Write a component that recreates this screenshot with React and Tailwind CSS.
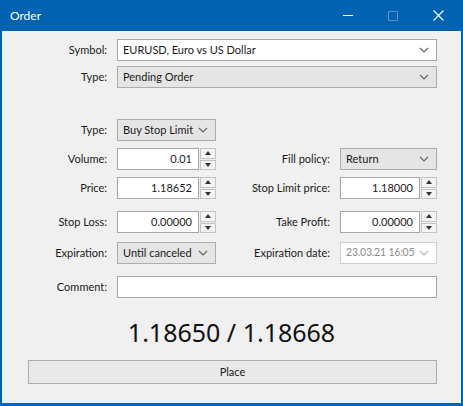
import React from "react";

const font = { fontFamily: 'Lato, "Noto Sans", sans-serif' };

function Chevron({ light }) {
  return (
    <svg width="10" height="6" viewBox="0 0 10 6" className="shrink-0">
      <path d="M1 1l4 4 4-4" fill="none" stroke={light ? "#b5b5b5" : "#606060"} strokeWidth="1.1" />
    </svg>
  );
}

function Select({ value, w, white, disabled }) {
  return (
    <div
      className={`flex h-[22px] items-center justify-between whitespace-nowrap border pl-[5px] pr-[7px] ${w} ${
        white
          ? "border-[#a6a6a6] bg-white text-[11px]"
          : disabled
          ? "border-[#cfcfcf] bg-white text-[10.5px] tracking-[-0.2px] text-[#8c8c8c]"
          : "border-[#adadad] bg-[#e5e5e5] text-[11px]"
      }`}
    >
      <span>{value}</span>
      <Chevron light={disabled} />
    </div>
  );
}

function Spin({ value, w }) {
  return (
    <div className={`flex h-[22px] items-stretch ${w}`}>
      <div className="flex flex-1 items-center justify-end border border-[#a6a6a6] bg-white pr-[6px] text-[11px]">
        {value}
      </div>
      <div className="ml-[1px] flex w-[16px] flex-col gap-[1px]">
        <div className="flex flex-1 items-center justify-center border border-[#c4c4c4] bg-[#f4f4f4]">
          <svg width="6" height="4" viewBox="0 0 6 4"><path d="M0 4L3 0 6 4z" fill="#333" /></svg>
        </div>
        <div className="flex flex-1 items-center justify-center border border-[#c4c4c4] bg-[#f4f4f4]">
          <svg width="6" height="4" viewBox="0 0 6 4"><path d="M0 0L3 4 6 0z" fill="#333" /></svg>
        </div>
      </div>
    </div>
  );
}

function Label({ children, w = "w-[107px]" }) {
  return <div className={`${w} shrink-0 whitespace-nowrap pr-[2px] text-right text-[11px]`}>{children}</div>;
}

export default function App() {
  return (
    <div className="flex h-[406px] w-[463px] flex-col bg-[#0063b1] px-[2px] pb-[3px] text-[#1a1a1a]" style={font}>
      <div className="flex h-[31px] shrink-0 items-center text-white">
        <span className="ml-[8px] flex-1 text-[12px]">Order</span>
        <div className="flex h-full items-center">
          <div className="flex h-full w-[45px] items-center justify-center">
            <div className="h-[1px] w-[10px] bg-white" />
          </div>
          <div className="flex h-full w-[45px] items-center justify-center">
            <div className="h-[10px] w-[10px] border border-[#5b8fcc]" />
          </div>
          <div className="flex h-full w-[46px] items-center justify-center">
            <svg width="11" height="11" viewBox="0 0 11 11">
              <path d="M0.5 0.5l10 10M10.5 0.5l-10 10" stroke="white" strokeWidth="1.1" />
            </svg>
          </div>
        </div>
      </div>
      <div className="flex flex-1 flex-col bg-[#f0f0f0] pr-[24px]">
        <div className="mt-[8px] flex items-center gap-[8px]">
          <Label>Symbol:</Label>
          <Select value="EURUSD, Euro vs US Dollar" w="flex-1" white />
        </div>
        <div className="mt-[5px] flex items-center gap-[8px]">
          <Label>Type:</Label>
          <Select value="Pending Order" w="flex-1" />
        </div>

        <div className="mt-[31px] flex items-center gap-[8px]">
          <Label>Type:</Label>
          <Select value="Buy Stop Limit" w="w-[99px]" />
        </div>
        <div className="mt-[7px] flex items-center gap-[8px]">
          <Label>Volume:</Label>
          <Spin value="0.01" w="w-[99px]" />
          <Label w="w-[108px]">Fill policy:</Label>
          <Select value="Return" w="flex-1" />
        </div>
        <div className="mt-[7px] flex items-center gap-[8px]">
          <Label>Price:</Label>
          <Spin value="1.18652" w="w-[99px]" />
          <Label w="w-[108px]">Stop Limit price:</Label>
          <div className="flex-1">
            <Spin value="1.18000" w="w-full" />
          </div>
        </div>
        <div className="mt-[12px] flex items-center gap-[8px]">
          <Label>Stop Loss:</Label>
          <Spin value="0.00000" w="w-[99px]" />
          <Label w="w-[108px]">Take Profit:</Label>
          <div className="flex-1">
            <Spin value="0.00000" w="w-full" />
          </div>
        </div>
        <div className="mt-[9px] flex items-center gap-[8px]">
          <Label>Expiration:</Label>
          <Select value="Until canceled" w="w-[99px]" />
          <Label w="w-[108px]">Expiration date:</Label>
          <Select value="23.03.21 16:05" w="flex-1" disabled />
        </div>
        <div className="mt-[12px] flex items-center gap-[8px]">
          <Label>Comment:</Label>
          <div className="h-[22px] flex-1 border border-[#a6a6a6] bg-white" />
        </div>

        <div
          className="mt-[17px] flex justify-center pl-[24px] text-[25px] leading-[34px] text-[#111]"
          style={{ fontFamily: '"Noto Sans", sans-serif' }}
        >
          1.18650 / 1.18668
        </div>

        <div className="ml-[26px] mt-[11px] flex h-[24px] items-center justify-center border border-[#adadad] bg-[#e9e9e9] text-[11px]">
          Place
        </div>
      </div>
    </div>
  );
}
